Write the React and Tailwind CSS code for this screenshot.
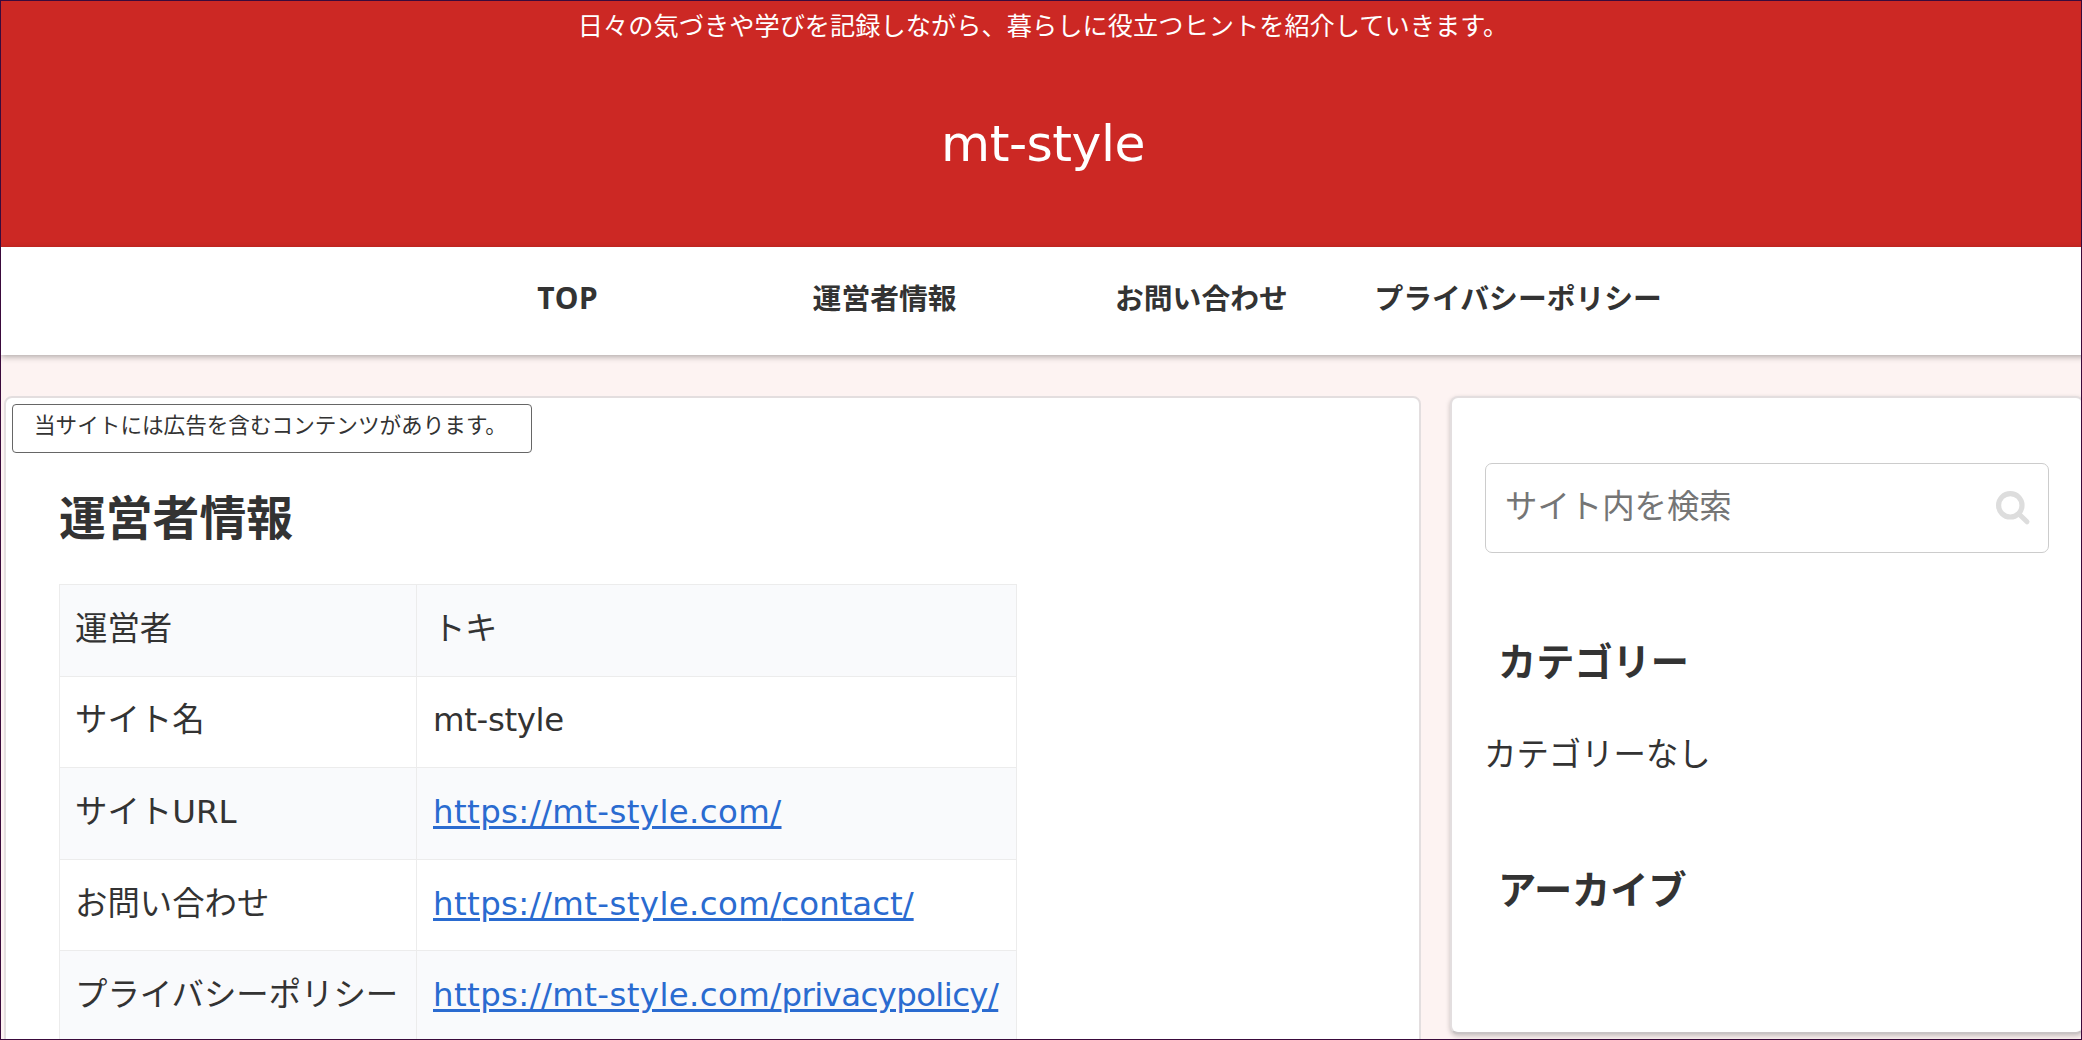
import React, { useState } from 'react';

const menuItems = ['TOP', '運営者情報', 'お問い合わせ', 'プライバシーポリシー'];

const SITE_URL = 'https://mt-style.com/';

const siteInfo = [
  { label: '運営者', value: 'トキ' },
  { label: 'サイト名', value: 'mt-style' },
  { label: 'サイトURL', path: '' },
  { label: 'お問い合わせ', path: 'contact/', spacing: 'tracking-[0px]' },
  { label: 'プライバシーポリシー', path: 'privacypolicy/', spacing: 'tracking-[-0.6px]' },
];

const SearchIcon = () => (
  <svg width="36" height="36" viewBox="0 0 36 36" fill="none" stroke="#dddddd" strokeLinecap="round">
    <circle cx="14.3" cy="15.3" r="11.7" strokeWidth="5.2" />
    <path d="M24 25L31 31.8" strokeWidth="5" />
  </svg>
);

const Header = () => (
  <header className="h-[246px] bg-[#cc2824] text-white text-center">
    <p className="pt-px text-[25.2px] leading-[50px] tracking-[0.05px]">
      日々の気づきや学びを記録しながら、暮らしに役立つヒントを紹介していきます。
    </p>
    <div className="pt-[57px] text-[50.4px] leading-[70px] tracking-[-0.5px]">mt-style</div>
  </header>
);

const GlobalNav = () => (
  <nav className="relative h-[108px] bg-white shadow-[0_2px_6px_rgba(0,0,0,0.3)]">
    <ul className="flex justify-center">
      {menuItems.map((item) => (
        <li
          key={item}
          className="w-[316.8px] text-center text-[28.8px] leading-[102px] font-bold whitespace-nowrap font-['Noto_Sans','Noto_Sans_CJK_JP',sans-serif]"
        >
          {item === 'TOP' ? <span className="text-[30px] tracking-[0.6px]">{item}</span> : item}
        </li>
      ))}
    </ul>
  </nav>
);

const InfoTable = () => (
  <table className="w-[958px] table-fixed border-collapse text-[32.4px] leading-[58px]">
    <tbody>
      {siteInfo.map((row) => (
        <tr key={row.label} className="h-[91.6px] odd:bg-[#f9fafc]">
          <td className="w-[357px] border border-[#ececec] px-[15px] pb-[3px] whitespace-nowrap">{row.label}</td>
          <td className="border border-[#ececec] px-4 pb-[3px] whitespace-nowrap">
            {row.value ? (
              <span className="tracking-[-0.35px]">{row.value}</span>
            ) : (
              <a href="#" className="text-[#2a6bd0] underline decoration-[3px] underline-offset-[3px] tracking-[0.4px]">
                {SITE_URL}
                <span className={row.spacing}>{row.path}</span>
              </a>
            )}
          </td>
        </tr>
      ))}
    </tbody>
  </table>
);

const Sidebar = () => {
  const [keyword, setKeyword] = useState('');

  return (
    <aside className="h-[638px] w-[634px] shrink-0 rounded-[8px] border-2 border-[#e3dedf] border-b-[#c9c4c5] bg-white pr-[31px] pl-[33px] pt-[65px] shadow-[0_2px_5px_rgba(0,0,0,0.22)]">
      <div className="flex h-[90px] w-[564px] items-center rounded-[7px] border border-[#cccccc] pl-[19px] pr-[16px]">
        <input
          value={keyword}
          onChange={(e) => setKeyword(e.target.value)}
          placeholder="サイト内を検索"
          className="h-[58px] min-w-0 flex-1 pb-[3px] text-[32.4px] outline-none placeholder:text-[#757575]"
        />
        <SearchIcon />
      </div>

      <h3 className="mt-[77px] px-[13px] text-[38.2px] leading-[66px] font-bold">カテゴリー</h3>
      <p className="mt-[30px] -ml-px text-[32.4px] leading-[58px]">カテゴリーなし</p>
      <h3 className="mt-[74px] px-[13px] text-[38.2px] leading-[66px] font-bold">アーカイブ</h3>
    </aside>
  );
};

const App = () => {
  return (
    <div className="h-[1040px] w-[2082px] overflow-hidden border border-[#3a0a3c] bg-[#fdf3f2] text-[#333333] font-['DejaVu_Sans','Noto_Sans_CJK_JP',sans-serif]">
      <div className="w-[2084px]">
        <Header />
        <GlobalNav />

        <div className="mt-[41px] flex items-start gap-[29px] pl-[3px]">
          <main className="h-[700px] w-[1417px] shrink-0 rounded-[8px] border-2 border-[#e3dedf] bg-white px-[6px] pt-[6px]">
            <div className="h-[49px] w-[520px] rounded-[4px] border border-[#666666] pl-[21px] text-[21.6px] leading-[42px] whitespace-nowrap">
              当サイトには広告を含むコンテンツがあります。
            </div>
            <div className="pl-[47px]">
              <h1 className="mt-[34px] mb-[32px] text-[46.8px] leading-[65px] font-bold">運営者情報</h1>
              <InfoTable />
            </div>
          </main>

          <Sidebar />
        </div>
      </div>
    </div>
  );
};

export default App;
